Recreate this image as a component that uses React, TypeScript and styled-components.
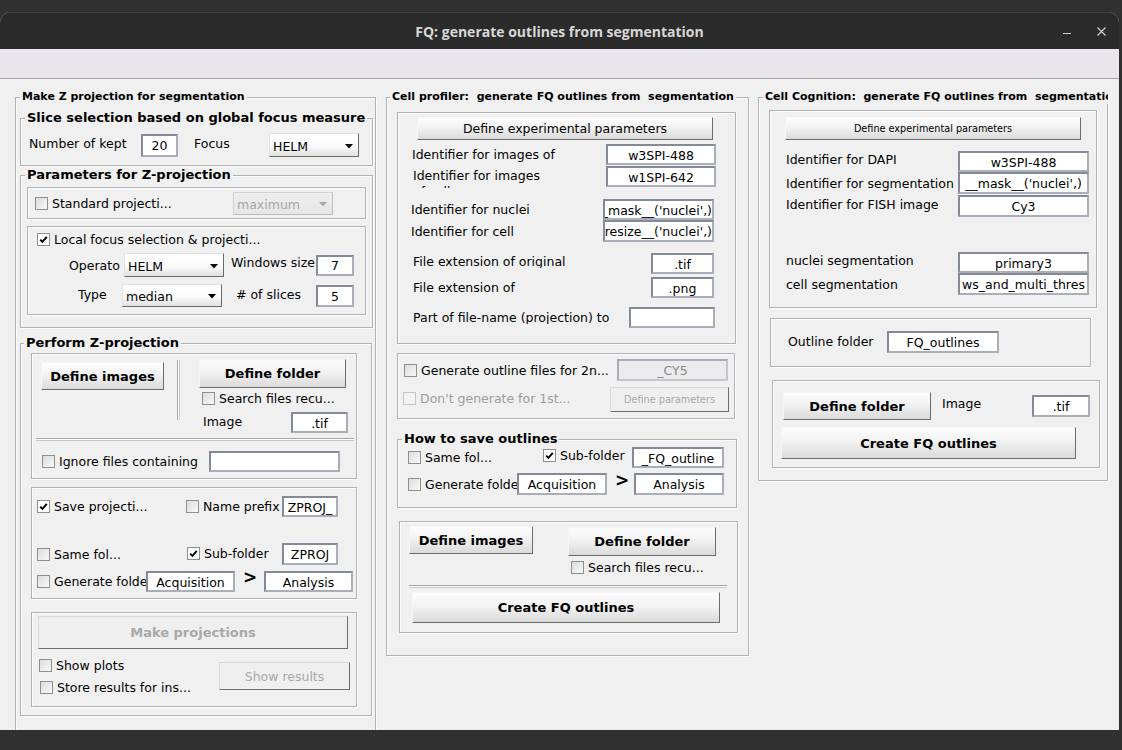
import React from "react";
import styled, { createGlobalStyle } from "styled-components";

const GlobalStyle = createGlobalStyle`
  html, body { margin: 0; padding: 0; }
  body {
    background: #303030;
    width: 1122px;
    height: 750px;
    overflow: hidden;
    font-family: "DejaVu Sans", "Liberation Sans", sans-serif;
    font-size: 12.5px;
    color: #000;
  }
  * { box-sizing: border-box; }
`;

const Window = styled.div`
  margin-top: 12px;
  width: 1119px;
  height: 718px;
  border-radius: 11px 11px 0 0;
  overflow: hidden;
  display: flex;
  flex-direction: column;
  background: #f0f0f0;
`;

const TitleBar = styled.header`
  flex: none;
  height: 37px;
  background: #2b2b2b;
  border-top: 1px solid #3e3e3e;
  display: grid;
  grid-template-columns: 1fr auto 1fr;
  align-items: center;
`;

const TitleText = styled.h1`
  grid-column: 2;
  margin: 0;
  font-family: "Open Sans", "DejaVu Sans", sans-serif;
  font-size: 14px;
  font-weight: 700;
  color: #d8d8d8;
`;

const WinControls = styled.div`
  grid-column: 3;
  justify-self: end;
  display: flex;
  align-items: center;
  gap: 26px;
  padding-right: 13px;
`;

const MinIcon = styled.span`
  width: 8px;
  height: 1px;
  background: #cfcfcf;
  margin-top: 5px;
`;

const MenuStrip = styled.div`
  flex: none;
  height: 30px;
  background: #e8e6eb;
  border-bottom: 1px solid #a6a6a6;
`;

const Content = styled.main`
  flex: 1;
  min-height: 0;
  display: flex;
  align-items: flex-start;
  padding: 18px 0 0 15px;
  overflow: hidden;
  background: #f0f0f0;
`;

const Box = styled.section<{ $w: number; $h: number; $ml?: number; $mt?: number }>`
  position: relative;
  flex: none;
  width: ${(p) => p.$w}px;
  height: ${(p) => p.$h}px;
  margin-left: ${(p) => p.$ml ?? 0}px;
  margin-top: ${(p) => p.$mt ?? 0}px;
  border: 1px solid #b2b2b2;
  box-shadow: inset 1px 1px 0 #fcfcfc, 1px 1px 0 #fcfcfc;
  display: flex;
  flex-direction: column;
  align-items: flex-start;
`;

const Legend = styled.div<{ $x: number; $size: number; $maxw?: number }>`
  position: absolute;
  top: -1px;
  left: ${(p) => p.$x}px;
  transform: translateY(-50%);
  padding: 0 2px;
  background: #f0f0f0;
  font-weight: bold;
  font-size: ${(p) => p.$size}px;
  line-height: 1.15;
  white-space: pre;
  overflow: hidden;
  max-width: ${(p) => (p.$maxw ? `${p.$maxw}px` : "none")};
`;

const Row = styled.div<{ $mt: number; $pl: number; $h: number }>`
  flex: none;
  display: flex;
  align-items: center;
  margin-top: ${(p) => p.$mt}px;
  padding-left: ${(p) => p.$pl}px;
  height: ${(p) => p.$h}px;
`;

const Cluster = styled.div`
  flex: none;
  display: flex;
  align-items: flex-start;
`;

const Stack = styled.div<{ $ml?: number; $mt?: number; $w?: number }>`
  flex: none;
  display: flex;
  flex-direction: column;
  align-items: flex-start;
  margin-left: ${(p) => p.$ml ?? 0}px;
  margin-top: ${(p) => p.$mt ?? 0}px;
  width: ${(p) => (p.$w ? `${p.$w}px` : "auto")};
`;

const Label = styled.span<{ $w: number; $ml?: number; $up?: number; $clip?: number }>`
  flex: none;
  width: ${(p) => p.$w}px;
  margin-left: ${(p) => p.$ml ?? 0}px;
  margin-bottom: ${(p) => (p.$up ?? 0) * 2}px;
  white-space: nowrap;
  overflow: hidden;
  height: ${(p) => (p.$clip ? `${p.$clip}px` : "auto")};
  line-height: ${(p) => (p.$clip ? "14px" : "normal")};
`;

const WrapLabel = styled.span<{ $w: number; $gap: number; $h: number }>`
  flex: none;
  width: ${(p) => p.$w}px;
  margin-right: ${(p) => p.$gap}px;
  height: ${(p) => p.$h}px;
  padding-top: 3px;
  line-height: 16px;
  overflow: hidden;
`;

const Field = styled.div<{ $w: number; $h: number; $ml?: number; $end?: boolean; $off?: boolean }>`
  flex: none;
  width: ${(p) => p.$w}px;
  height: ${(p) => p.$h}px;
  margin-left: ${(p) => p.$ml ?? 0}px;
  background: ${(p) => (p.$off ? "#ebebeb" : "#fff")};
  border: 2px solid;
  border-color: ${(p) => (p.$off ? "#a9adb9 #c3c6cf #c3c6cf #a9adb9" : "#858a99 #aaaebb #aaaebb #858a99")};
  color: ${(p) => (p.$off ? "#8a8a8a" : "#000")};
  display: flex;
  align-items: center;
  justify-content: ${(p) => (p.$end ? "flex-end" : "center")};
  padding-top: 1px;
  overflow: hidden;
  white-space: nowrap;
  & > span { flex: none; }
`;

const SelectBox = styled.div<{ $w: number; $h: number; $ml?: number; $off?: boolean }>`
  flex: none;
  width: ${(p) => p.$w}px;
  height: ${(p) => p.$h}px;
  margin-left: ${(p) => p.$ml ?? 0}px;
  display: flex;
  align-items: center;
  justify-content: space-between;
  padding: 2px 5px 0 3px;
  background: ${(p) =>
    p.$off ? "linear-gradient(180deg, #eeeeee, #e6e6e6)" : "linear-gradient(180deg, #ffffff 0%, #fbfbfb 55%, #e0e0e0 100%)"};
  border: 1px solid;
  border-color: ${(p) => (p.$off ? "#d2d2d2 #bdbdbd #bdbdbd #d2d2d2" : "#e2e2e2 #6a6a6a #6a6a6a #e2e2e2")};
  color: ${(p) => (p.$off ? "#a7a7a7" : "#000")};
`;

const Btn = styled.button<{
  $w: number;
  $h: number;
  $ml?: number;
  $mt?: number;
  $bold?: boolean;
  $size?: number;
  $off?: boolean;
}>`
  flex: none;
  width: ${(p) => p.$w}px;
  height: ${(p) => p.$h}px;
  margin: ${(p) => p.$mt ?? 0}px 0 0 ${(p) => p.$ml ?? 0}px;
  padding: 0;
  font-family: inherit;
  font-size: ${(p) => p.$size ?? 12.5}px;
  font-weight: ${(p) => (p.$bold ? "bold" : "normal")};
  color: ${(p) => (p.$off ? "#a8a8a8" : "#000")};
  background: ${(p) =>
    p.$off ? "#efefef" : "linear-gradient(180deg, #fdfdfd 0%, #f2f2f2 45%, #dadada 100%)"};
  border: 1px solid;
  border-color: ${(p) => (p.$off ? "#d9d9d9 #6e6e6e #6e6e6e #d9d9d9" : "#f6f6f6 #6c6c6c #6c6c6c #f6f6f6")};
  display: flex;
  align-items: center;
  justify-content: center;
  white-space: nowrap;
  cursor: default;
`;

const CheckItem = styled.span<{ $w?: number; $ml?: number; $mt?: number; $up?: number; $off?: boolean }>`
  flex: none;
  display: flex;
  align-items: center;
  width: ${(p) => (p.$w ? `${p.$w}px` : "auto")};
  margin: ${(p) => p.$mt ?? 0}px 0 ${(p) => (p.$up ?? 0) * 2}px ${(p) => p.$ml ?? 0}px;
  overflow: hidden;
  white-space: nowrap;
  color: ${(p) => (p.$off ? "#9d9d9d" : "#000")};
`;

const CheckBox = styled.span<{ $on?: boolean; $off?: boolean }>`
  flex: none;
  width: 13px;
  height: 13px;
  margin-right: 4px;
  border: 1px solid ${(p) => (p.$off ? "#c6c6c6" : "#8e8f8f")};
  background: ${(p) =>
    p.$on ? "#fff" : p.$off ? "#f3f3f3" : "linear-gradient(135deg, #dcdcdc 0%, #f9f9f9 100%)"};
  display: flex;
  align-items: center;
  justify-content: center;
`;

const Arrow = styled.span<{ $w: number }>`
  flex: none;
  width: ${(p) => p.$w}px;
  padding-left: 8px;
  margin-bottom: 8px;
  font-weight: bold;
  font-size: 17px;
  line-height: 1;
`;

const VRule = styled.div<{ $ml: number; $mt: number; $h: number }>`
  flex: none;
  width: 3px;
  height: ${(p) => p.$h}px;
  margin: ${(p) => p.$mt}px 0 0 ${(p) => p.$ml}px;
  border-left: 1px solid #a6a6a6;
  border-right: 1px solid #c8c8c8;
  background: #fff;
`;

const HRule = styled.div<{ $ml: number; $mt: number; $w: number }>`
  flex: none;
  height: 3px;
  width: ${(p) => p.$w}px;
  margin: ${(p) => p.$mt}px 0 0 ${(p) => p.$ml}px;
  border-top: 1px solid #a6a6a6;
  border-bottom: 1px solid #c8c8c8;
  background: #fff;
`;

type CheckProps = {
  label: string;
  on?: boolean;
  off?: boolean;
  w?: number;
  ml?: number;
  mt?: number;
  up?: number;
};

function Check({ label, on, off, w, ml, mt, up }: CheckProps) {
  return (
    <CheckItem $w={w} $ml={ml} $mt={mt} $up={up} $off={off}>
      <CheckBox $on={on} $off={off}>
        {on && (
          <svg width="9" height="9" viewBox="0 0 9 9">
            <path d="M1.2 4.6 L3.4 6.9 L7.8 1.8" fill="none" stroke="#000" strokeWidth="1.9" />
          </svg>
        )}
      </CheckBox>
      {label}
    </CheckItem>
  );
}

type SelectProps = { value: string; w: number; h: number; ml?: number; off?: boolean };

function Select({ value, w, h, ml, off }: SelectProps) {
  return (
    <SelectBox $w={w} $h={h} $ml={ml} $off={off}>
      <span>{value}</span>
      <svg width="8" height="5" viewBox="0 0 8 5">
        <polygon points="0,0 8,0 4,4.6" fill={off ? "#a7a7a7" : "#000"} />
      </svg>
    </SelectBox>
  );
}

function TextField({
  value,
  w,
  h,
  ml,
  end,
  off,
}: {
  value: string;
  w: number;
  h: number;
  ml?: number;
  end?: boolean;
  off?: boolean;
}) {
  return (
    <Field $w={w} $h={h} $ml={ml} $end={end} $off={off}>
      <span>{value}</span>
    </Field>
  );
}

function LeftPanel() {
  return (
    <Box $w={361} $h={650}>
      <Legend $x={4} $size={11}>
        Make Z projection for segmentation
      </Legend>

      <Box $w={353} $h={48} $ml={4} $mt={20}>
        <Legend $x={4} $size={13} $maxw={343}>
          Slice selection based on global focus measure
        </Legend>
        <Row $mt={14} $pl={8} $h={24}>
          <Label $w={112} $up={2}>Number of kept</Label>
          <TextField value="20" w={37} h={23} />
          <Label $w={75} $ml={16} $up={2}>Focus</Label>
          <Select value="HELM" w={90} h={24} />
        </Row>
      </Box>

      <Box $w={353} $h={153} $ml={4} $mt={9}>
        <Legend $x={4} $size={13}>
          Parameters for Z-projection
        </Legend>
        <Box $w={339} $h={32} $ml={6} $mt={11}>
          <Row $mt={4} $pl={7} $h={23}>
            <Check label="Standard projecti..." w={198} />
            <Select value="maximum" w={100} h={23} off />
          </Row>
        </Box>
        <Box $w={339} $h={89} $ml={6} $mt={7}>
          <Row $mt={6} $pl={9} $h={13}>
            <Check label="Local focus selection & projecti..." on />
          </Row>
          <Row $mt={7} $pl={41} $h={24}>
            <Label $w={55}>Operato</Label>
            <Select value="HELM" w={100} h={24} />
            <Label $w={85} $ml={7} $up={3}>Windows size</Label>
            <TextField value="7" w={38} h={21} />
          </Row>
          <Row $mt={7} $pl={50} $h={23}>
            <Label $w={44} $up={1}>Type</Label>
            <Select value="median" w={100} h={23} />
            <Label $w={80} $ml={14} $up={1}># of slices</Label>
            <TextField value="5" w={38} h={22} />
          </Row>
        </Box>
      </Box>

      <Box $w={352} $h={373} $ml={4} $mt={15}>
        <Legend $x={3} $size={13}>
          Perform Z-projection
        </Legend>
        <Box $w={326} $h={126} $ml={10} $mt={9}>
          <Cluster>
            <Btn $w={123} $h={28} $ml={9} $mt={8} $bold $size={13}>
              Define images
            </Btn>
            <VRule $ml={13} $mt={6} $h={60} />
            <Stack $ml={19}>
              <Btn $w={147} $h={29} $mt={5} $bold $size={13}>
                Define folder
              </Btn>
              <Check label="Search files recu..." ml={3} mt={3} />
              <Row $mt={6} $pl={4} $h={21}>
                <Label $w={88} $up={1}>Image</Label>
                <TextField value=".tif" w={57} h={21} />
              </Row>
            </Stack>
          </Cluster>
          <HRule $ml={4} $mt={5} $w={318} />
          <Row $mt={10} $pl={10} $h={21}>
            <Check label="Ignore files containing" w={167} />
            <TextField value="" w={131} h={21} />
          </Row>
        </Box>

        <Box $w={326} $h={112} $ml={10} $mt={8}>
          <Row $mt={8} $pl={5} $h={21}>
            <Check label="Save projecti..." on w={149} />
            <Check label="Name prefix" w={96} />
            <TextField value="ZPROJ_" w={56} h={21} />
          </Row>
          <Row $mt={26} $pl={5} $h={22}>
            <Check label="Same fol..." w={150} />
            <Check label="Sub-folder" on w={95} up={1} />
            <TextField value="ZPROJ" w={56} h={22} />
          </Row>
          <Row $mt={6} $pl={5} $h={21}>
            <Check label="Generate folders" w={109} />
            <TextField value="Acquisition" w={89} h={21} />
            <Arrow $w={29}>&gt;</Arrow>
            <TextField value="Analysis" w={89} h={21} />
          </Row>
        </Box>

        <Box $w={326} $h={95} $ml={10} $mt={13}>
          <Btn $w={310} $h={33} $ml={6} $mt={3} $bold $size={13} $off>
            Make projections
          </Btn>
          <Row $mt={13} $pl={7} $h={28}>
            <Stack $w={180}>
              <Check label="Show plots" mt={0} />
              <Check label="Store results for ins..." ml={1} mt={7} />
            </Stack>
            <Btn $w={131} $h={28} $off>
              Show results
            </Btn>
          </Row>
        </Box>
      </Box>
    </Box>
  );
}

function MiddlePanel() {
  return (
    <Box $w={363} $h={559} $ml={10}>
      <Legend $x={3} $size={11}>
        {"Cell profiler:  generate FQ outlines from  segmentation"}
      </Legend>

      <Box $w={339} $h={232} $ml={10} $mt={14}>
        <Btn $w={296} $h={23} $ml={19} $mt={4}>
          Define experimental parameters
        </Btn>
        <Row $mt={4} $pl={14} $h={21}>
          <Label $w={194}>Identifier for images of</Label>
          <TextField value="w3SPI-488" w={110} h={21} />
        </Row>
        <Row $mt={1} $pl={15} $h={21}>
          <WrapLabel $w={135} $gap={58} $h={23}>
            Identifier for images of cell
          </WrapLabel>
          <TextField value="w1SPI-642" w={110} h={21} />
        </Row>
        <Row $mt={12} $pl={13} $h={21}>
          <Label $w={192}>Identifier for nuclei</Label>
          <TextField value="__mask__('nuclei',)" w={111} h={21} end />
        </Row>
        <Row $mt={0} $pl={13} $h={22}>
          <Label $w={192}>Identifier for cell</Label>
          <TextField value="__resize__('nuclei',)" w={111} h={22} end />
        </Row>
        <Row $mt={11} $pl={15} $h={21}>
          <Label $w={238} $clip={13} $up={2}>File extension of original</Label>
          <TextField value=".tif" w={63} h={21} />
        </Row>
        <Row $mt={3} $pl={15} $h={21}>
          <Label $w={238}>File extension of</Label>
          <TextField value=".png" w={63} h={21} />
        </Row>
        <Row $mt={9} $pl={15} $h={21}>
          <Label $w={216} $clip={13}>Part of file-name (projection) to</Label>
          <TextField value="" w={86} h={21} />
        </Row>
      </Box>

      <Box $w={338} $h={66} $ml={10} $mt={9}>
        <Row $mt={5} $pl={6} $h={22}>
          <Check label="Generate outline files for 2n..." w={213} />
          <TextField value="_CY5" w={111} h={22} off />
        </Row>
        <Row $mt={6} $pl={5} $h={25}>
          <Check label="Don't generate for 1st..." w={207} off up={1} />
          <Btn $w={119} $h={25} $size={9.7} $off>
            Define parameters
          </Btn>
        </Row>
      </Box>

      <Box $w={340} $h={69} $ml={10} $mt={20}>
        <Legend $x={4} $size={13}>
          How to save outlines
        </Legend>
        <Row $mt={7} $pl={10} $h={21}>
          <Check label="Same fol..." w={135} />
          <Check label="Sub-folder" on w={89} up={2} />
          <TextField value="_FQ_outline" w={92} h={21} />
        </Row>
        <Row $mt={5} $pl={10} $h={22}>
          <Check label="Generate folders" w={109} />
          <TextField value="Acquisition" w={90} h={22} />
          <Arrow $w={27}>&gt;</Arrow>
          <TextField value="Analysis" w={90} h={22} />
        </Row>
      </Box>

      <Box $w={339} $h={112} $ml={12} $mt={13}>
        <Cluster>
          <Btn $w={124} $h={28} $ml={9} $mt={4} $bold $size={13}>
            Define images
          </Btn>
          <Stack $ml={35}>
            <Btn $w={148} $h={29} $mt={5} $bold $size={13}>
              Define folder
            </Btn>
            <Check label="Search files recu..." ml={3} mt={4} />
          </Stack>
        </Cluster>
        <HRule $ml={9} $mt={10} $w={318} />
        <Btn $w={308} $h={31} $ml={12} $mt={4} $bold $size={13}>
          Create FQ outlines
        </Btn>
      </Box>
    </Box>
  );
}

function RightPanel() {
  return (
    <Box $w={350} $h={384} $ml={9}>
      <Legend $x={4} $size={11} $maxw={345}>
        {"Cell Cognition:  generate FQ outlines from  segmentation"}
      </Legend>

      <Box $w={328} $h={198} $ml={10} $mt={12}>
        <Btn $w={296} $h={23} $ml={15} $mt={6} $size={9.7}>
          Define experimental parameters
        </Btn>
        <Row $mt={11} $pl={16} $h={21}>
          <Label $w={172} $up={2}>Identifier for DAPI</Label>
          <TextField value="w3SPI-488" w={131} h={21} />
        </Row>
        <Row $mt={0} $pl={16} $h={22}>
          <Label $w={172}>Identifier for segmentation</Label>
          <TextField value="__mask__('nuclei',)" w={131} h={22} />
        </Row>
        <Row $mt={1} $pl={16} $h={22}>
          <Label $w={172} $up={2}>Identifier for FISH image</Label>
          <TextField value="Cy3" w={131} h={22} />
        </Row>
        <Row $mt={35} $pl={16} $h={21}>
          <Label $w={172} $up={2}>nuclei segmentation</Label>
          <TextField value="primary3" w={131} h={21} />
        </Row>
        <Row $mt={0} $pl={16} $h={22}>
          <Label $w={172}>cell segmentation</Label>
          <TextField value="ws_and_multi_thres" w={131} h={22} />
        </Row>
      </Box>

      <Box $w={321} $h={49} $ml={11} $mt={10}>
        <Row $mt={12} $pl={17} $h={22}>
          <Label $w={99} $up={1}>Outline folder</Label>
          <TextField value="FQ_outlines" w={112} h={22} />
        </Row>
      </Box>

      <Box $w={328} $h={88} $ml={13} $mt={13}>
        <Row $mt={11} $pl={10} $h={28}>
          <Btn $w={148} $h={28} $bold $size={13}>
            Define folder
          </Btn>
          <Label $w={90} $ml={11} $up={3}>Image</Label>
          <TextField value=".tif" w={58} h={22} />
        </Row>
        <Btn $w={295} $h={32} $ml={8} $mt={7} $bold $size={13}>
          Create FQ outlines
        </Btn>
      </Box>
    </Box>
  );
}

export default function App() {
  return (
    <>
      <GlobalStyle />
      <Window>
        <TitleBar>
          <TitleText>FQ: generate outlines from segmentation</TitleText>
          <WinControls>
            <MinIcon />
            <svg width="9" height="9" viewBox="0 0 9 9">
              <path d="M0.5 0.5 L8.5 8.5 M8.5 0.5 L0.5 8.5" stroke="#cfcfcf" strokeWidth="1.2" />
            </svg>
          </WinControls>
        </TitleBar>
        <MenuStrip />
        <Content>
          <LeftPanel />
          <MiddlePanel />
          <RightPanel />
        </Content>
      </Window>
    </>
  );
}
